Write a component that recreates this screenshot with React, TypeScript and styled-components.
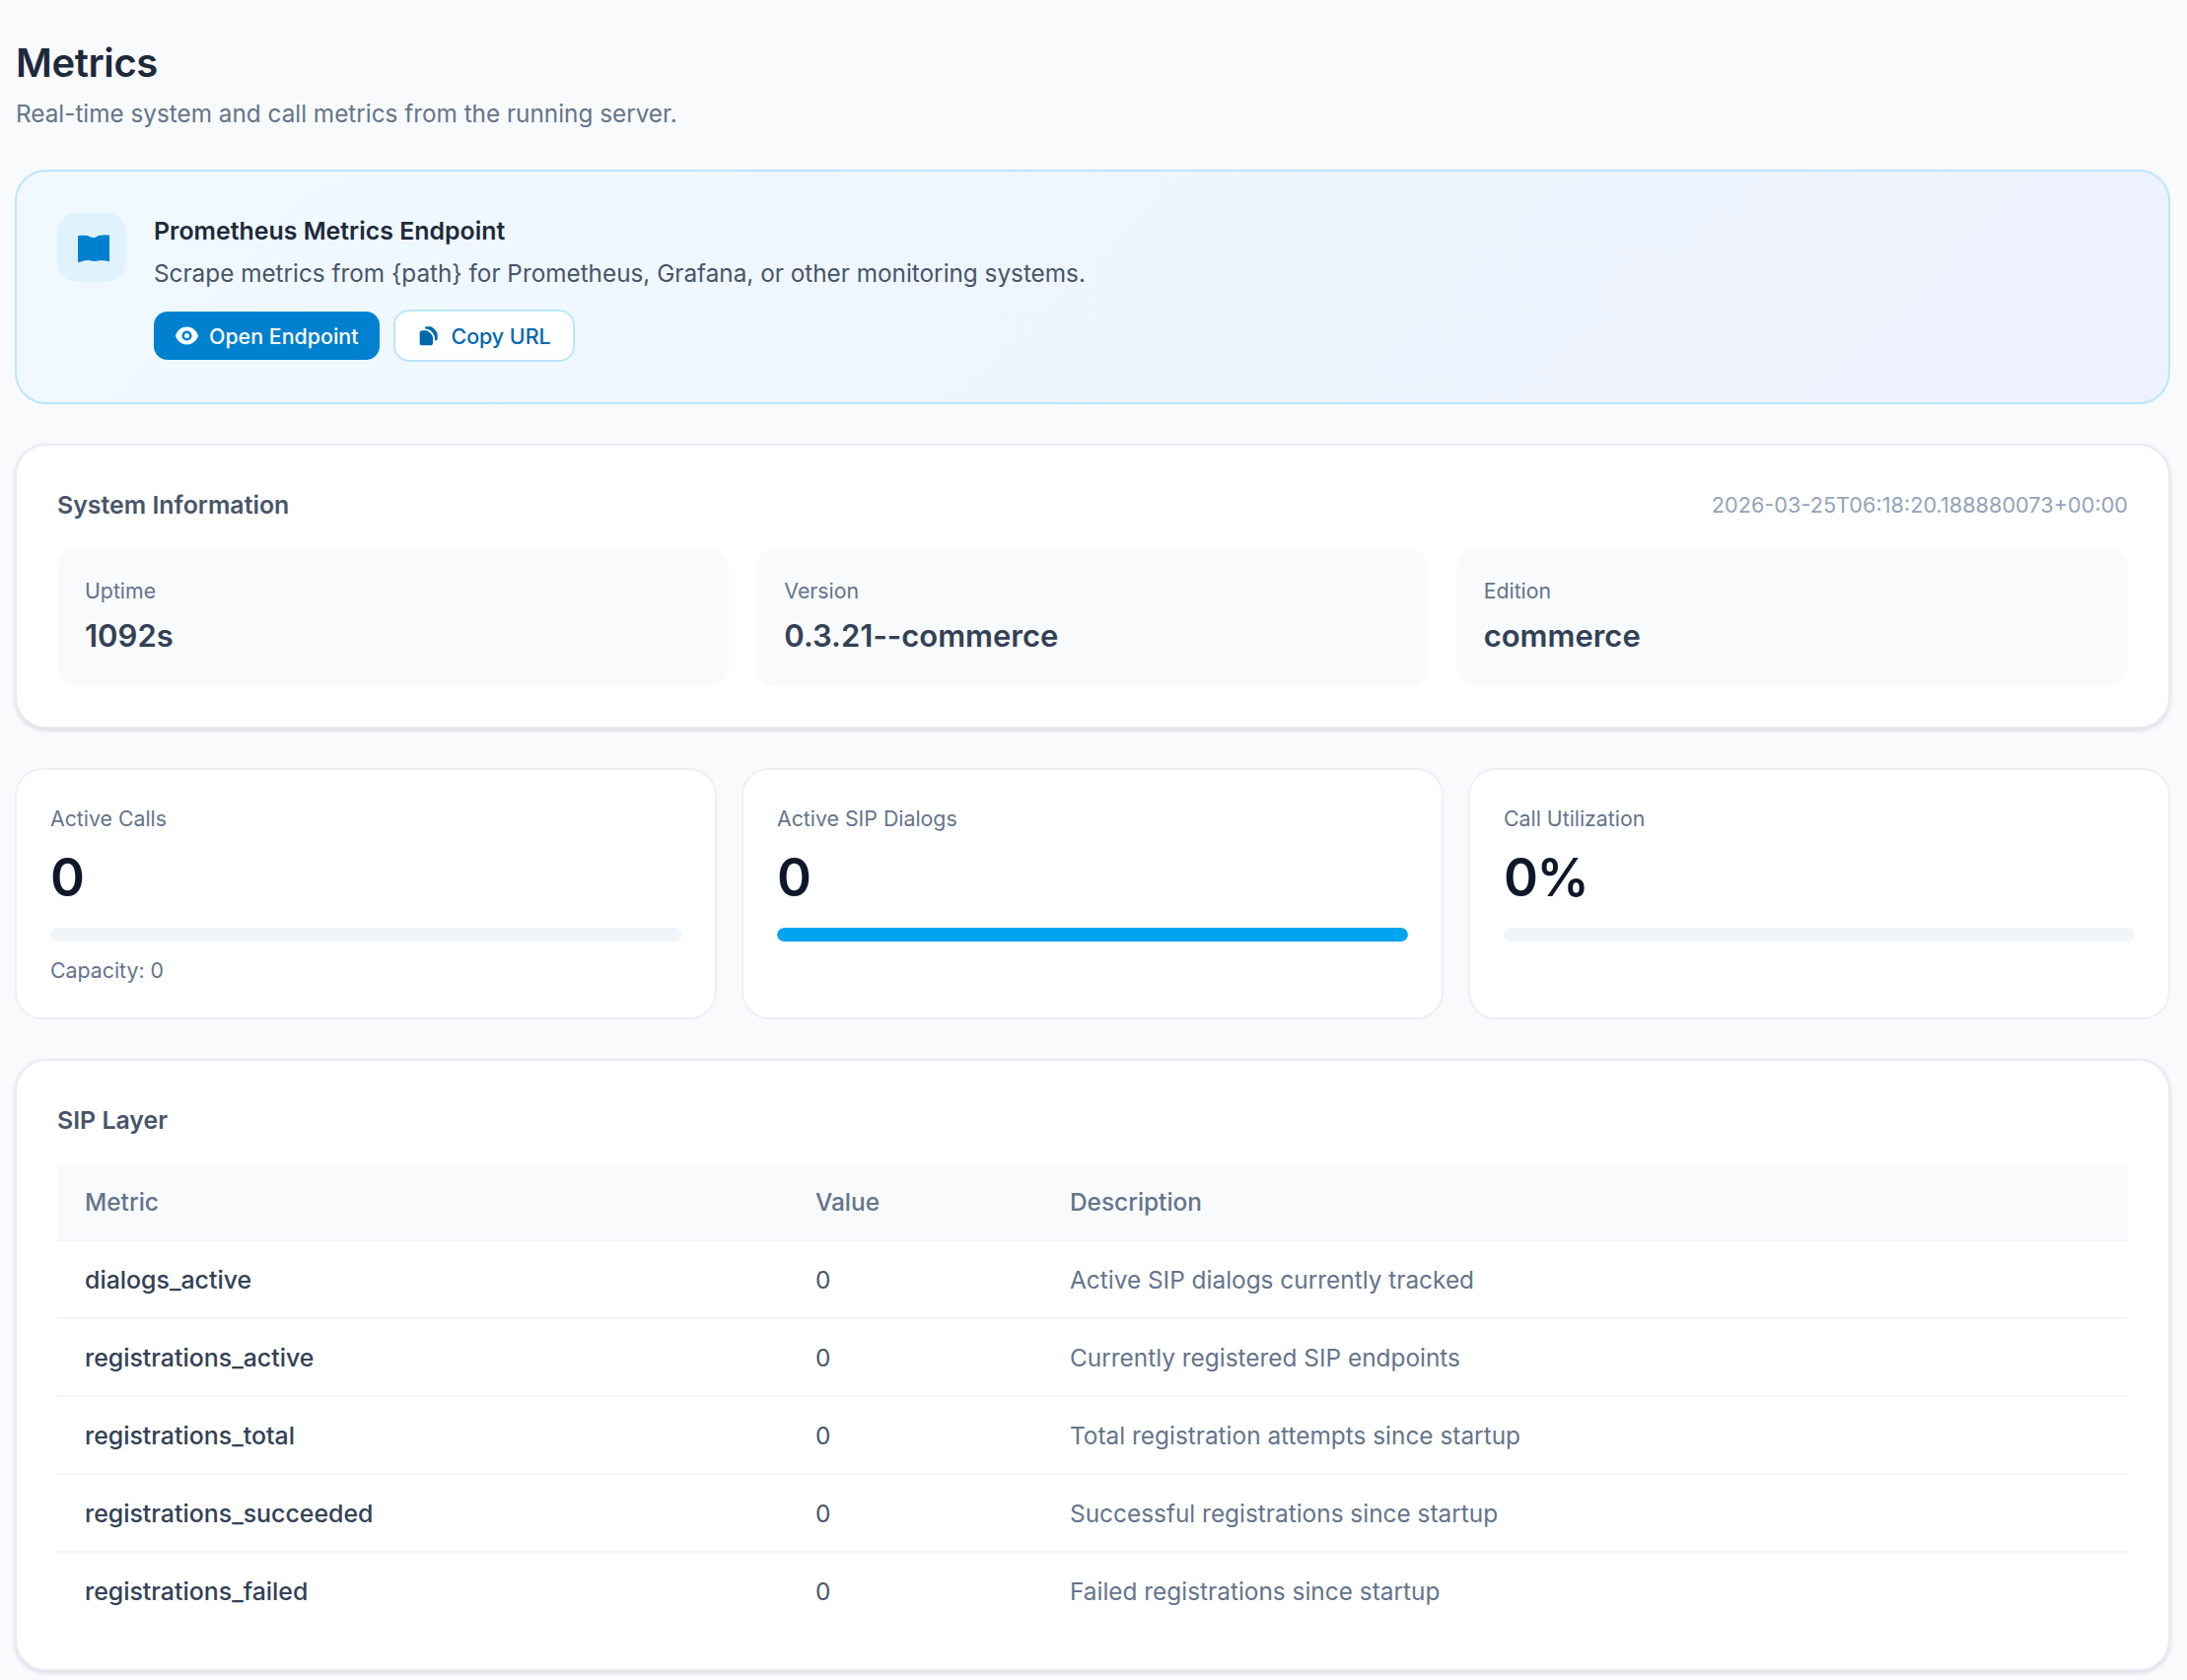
import React from "react";
import styled, { createGlobalStyle } from "styled-components";

const Global = createGlobalStyle`
  html, body { margin: 0; padding: 0; background: #f8fafc; }
  body { font-family: Inter, "Noto Sans", "Liberation Sans", sans-serif; -webkit-font-smoothing: antialiased; }
  * { box-sizing: border-box; }
`;

const Page = styled.main`
  display: flex;
  flex-direction: column;
  gap: 40px;
  min-height: 1704px;
  padding: 40px 17px 9px 15px;
  background: #f8fafc;
`;

const Header = styled.header`
  display: flex;
  flex-direction: column;
  gap: 11px;
  padding-left: 1px;
`;

const Title = styled.h1`
  margin: 0;
  font-size: 40px;
  line-height: 48px;
  font-weight: 600;
  letter-spacing: -0.4px;
  color: #1e293b;
`;

const Subtitle = styled.p`
  margin: 0;
  font-size: 24.3px;
  line-height: 33px;
  color: #64748b;
`;

const Banner = styled.section`
  display: flex;
  gap: 28px;
  padding: 42px 41px 41px;
  border: 2px solid #bae6fd;
  border-radius: 32px;
  background: linear-gradient(135deg, #f0f9ff 0%, #eef2ff 100%);
`;

const BannerIcon = styled.div`
  display: flex;
  align-items: center;
  justify-content: center;
  flex: none;
  width: 70px;
  height: 70px;
  padding: 1px 0 0 3px;
  border-radius: 20px;
  background: #e0f2fe;
`;

const BannerBody = styled.div`
  display: flex;
  flex-direction: column;
`;

const BannerTitle = styled.h2`
  margin: 0;
  font-size: 24.9px;
  line-height: 36px;
  font-weight: 600;
  color: #1e293b;
`;

const BannerText = styled.p`
  margin: 7px 0 0;
  font-size: 24.3px;
  line-height: 36px;
  color: #475569;
`;

const Actions = styled.div`
  display: flex;
  align-items: center;
  gap: 14px;
  margin-top: 19px;
`;

const PrimaryButton = styled.button`
  display: inline-flex;
  align-items: center;
  gap: 11px;
  height: 49px;
  padding: 0 22px;
  border: none;
  border-radius: 14px;
  background: #0081d0;
  color: #fff;
  font: 500 21.4px Inter, sans-serif;
`;

const GhostButton = styled.button`
  display: inline-flex;
  align-items: center;
  gap: 13px;
  height: 53px;
  padding: 0 22px 0 24px;
  border: 2px solid #bae6fd;
  border-radius: 16px;
  background: #fff;
  color: #0068ad;
  font: 500 21.4px Inter, sans-serif;
`;

const Card = styled.section<{ $bottom?: number }>`
  padding: 41px 41px ${(p) => p.$bottom ?? 41}px;
  border: 2px solid #e8ecf1;
  border-radius: 32px;
  background: #fff;
  box-shadow: 0 2px 4px rgba(15, 23, 42, 0.14);
`;

const CardHead = styled.div`
  display: flex;
  align-items: center;
  justify-content: space-between;
  height: 35px;
  padding-top: 2px;
  margin-bottom: 28px;
`;

const CardTitle = styled.h3`
  margin: 0;
  font-size: 24.9px;
  font-weight: 600;
  color: #475569;
`;

const Stamp = styled.span`
  font-size: 21.7px;
  color: #94a3b8;
`;

const TileGrid = styled.div`
  display: grid;
  grid-template-columns: repeat(3, 1fr);
  gap: 28px;
`;

const Tile = styled.div`
  display: flex;
  flex-direction: column;
  gap: 10px;
  height: 140px;
  padding: 29px 28px 0;
  border-radius: 20px;
  background: #f8fafc;
`;

const TileLabel = styled.span`
  font-size: 21.3px;
  line-height: 28px;
  color: #64748b;
`;

const TileValue = styled.span`
  font-size: 31px;
  line-height: 44px;
  font-weight: 600;
  color: #334155;
`;

const StatGrid = styled.div`
  display: grid;
  grid-template-columns: repeat(3, 1fr);
  gap: 25px;
`;

const StatCard = styled.div`
  height: 255px;
  padding: 35px 34px 0;
  border: 2px solid #edf0f4;
  border-radius: 28px;
  background: #fff;
`;

const StatLabel = styled.div`
  font-size: 21.3px;
  line-height: 28px;
  color: #64748b;
`;

const StatValue = styled.div`
  margin-top: 11px;
  font-size: 53px;
  line-height: 70px;
  font-weight: 600;
  letter-spacing: -1.5px;
  color: #0f172a;
`;

const Track = styled.div`
  height: 14px;
  margin-top: 16px;
  border-radius: 7px;
  background: #f1f5f9;
  overflow: hidden;
`;

const Fill = styled.div`
  height: 100%;
  border-radius: 7px;
  background: #00a5ef;
`;

const StatNote = styled.div`
  margin-top: 15px;
  font-size: 21.3px;
  line-height: 28px;
  color: #64748b;
`;

const Table = styled.table`
  width: 100%;
  table-layout: fixed;
  border-collapse: separate;
  border-spacing: 0;
`;

const Th = styled.th<{ $w?: number }>`
  width: ${(p) => (p.$w ? `${p.$w}px` : "auto")};
  height: 79px;
  padding: 0 28px;
  border-bottom: 2px solid #f1f5f9;
  background: #f8fafc;
  text-align: left;
  font-size: 24.4px;
  font-weight: 500;
  color: #64748b;
`;

const Td = styled.td<{ $kind: "name" | "value" | "desc" }>`
  height: 79px;
  padding: 0 28px;
  border-bottom: 2px solid #f1f5f9;
  font-size: ${(p) => (p.$kind === "name" ? "24.9px" : "24.4px")};
  font-weight: ${(p) => (p.$kind === "name" ? 500 : 400)};
  color: ${(p) => (p.$kind === "name" ? "#334155" : p.$kind === "value" ? "#475569" : "#64748b")};
  tr:last-child > & {
    height: 78px;
    border-bottom: none;
  }
`;

const BookIcon = () => (
  <svg width="32" height="28" viewBox="0 0 32 28" fill="#0081d0">
    <path d="M0 1.2C3 0.6 6 0.6 9.5 0.9C11 1 12 2.4 14 2.8C16 3.1 18 2.9 19.5 1.7C21 0.6 24 0.7 27 0.2C29 0 30.5 0.3 32 0.6V27.3C30 26.6 27 26.4 24 26.2C21.5 26 20 26.6 18 27C16 27.3 14.5 26.8 12.5 26.2C10 25.7 8 26 6 26.4C4 26.8 2 28 0 28Z" />
  </svg>
);

const EyeIcon = () => (
  <svg width="23" height="19" viewBox="0 0 23 19">
    <path
      fillRule="evenodd"
      fill="#fff"
      d="M11.5 .5C16.5 .5 20.5 3.5 22.6 8.2a3 3 0 0 1 0 2.6C20.5 15.5 16.5 18.5 11.5 18.5S2.5 15.5 .4 10.8a3 3 0 0 1 0-2.6C2.5 3.5 6.5 .5 11.5 .5ZM11.5 4.4A5.1 5.1 0 1 0 11.5 14.6A5.1 5.1 0 1 0 11.5 4.4Z"
    />
    <circle cx="11.5" cy="9.5" r="2.5" fill="#fff" />
  </svg>
);

const CopyIcon = () => (
  <svg width="19" height="21" viewBox="0 0 57 63" fill="#0068ad">
    <path d="M10 16H22C30 18 40 28 42 36V53a8 8 0 0 1-8 8H10a8 8 0 0 1-8-8V24a8 8 0 0 1 8-8Z" />
    <path d="M17 9a6 6 0 0 1 6-5H36C44 8 54 18 56 26V40a6 6 0 0 1-8 6V36C46 24 32 10 22 11Z" />
  </svg>
);

const rows = [
  ["dialogs_active", "Active SIP dialogs currently tracked"],
  ["registrations_active", "Currently registered SIP endpoints"],
  ["registrations_total", "Total registration attempts since startup"],
  ["registrations_succeeded", "Successful registrations since startup"],
  ["registrations_failed", "Failed registrations since startup"],
];

export default function App() {
  return (
    <Page>
      <Global />
      <Header>
        <Title>Metrics</Title>
        <Subtitle>Real-time system and call metrics from the running server.</Subtitle>
      </Header>

      <Banner>
        <BannerIcon>
          <BookIcon />
        </BannerIcon>
        <BannerBody>
          <BannerTitle>Prometheus Metrics Endpoint</BannerTitle>
          <BannerText>Scrape metrics from {"{path}"} for Prometheus, Grafana, or other monitoring systems.</BannerText>
          <Actions>
            <PrimaryButton>
              <EyeIcon />
              Open Endpoint
            </PrimaryButton>
            <GhostButton>
              <CopyIcon />
              Copy URL
            </GhostButton>
          </Actions>
        </BannerBody>
      </Banner>

      <Card>
        <CardHead>
          <CardTitle>System Information</CardTitle>
          <Stamp>2026-03-25T06:18:20.188880073+00:00</Stamp>
        </CardHead>
        <TileGrid>
          <Tile>
            <TileLabel>Uptime</TileLabel>
            <TileValue>1092s</TileValue>
          </Tile>
          <Tile>
            <TileLabel>Version</TileLabel>
            <TileValue>0.3.21--commerce</TileValue>
          </Tile>
          <Tile>
            <TileLabel>Edition</TileLabel>
            <TileValue>commerce</TileValue>
          </Tile>
        </TileGrid>
      </Card>

      <StatGrid>
        <StatCard>
          <StatLabel>Active Calls</StatLabel>
          <StatValue>0</StatValue>
          <Track />
          <StatNote>Capacity: 0</StatNote>
        </StatCard>
        <StatCard>
          <StatLabel>Active SIP Dialogs</StatLabel>
          <StatValue>0</StatValue>
          <Track>
            <Fill />
          </Track>
        </StatCard>
        <StatCard>
          <StatLabel>Call Utilization</StatLabel>
          <StatValue>0%</StatValue>
          <Track />
        </StatCard>
      </StatGrid>

      <Card $bottom={40}>
        <CardHead>
          <CardTitle>SIP Layer</CardTitle>
        </CardHead>
        <Table>
          <thead>
            <tr>
              <Th $w={741}>Metric</Th>
              <Th $w={258}>Value</Th>
              <Th>Description</Th>
            </tr>
          </thead>
          <tbody>
            {rows.map(([name, desc]) => (
              <tr key={name}>
                <Td $kind="name">{name}</Td>
                <Td $kind="value">0</Td>
                <Td $kind="desc">{desc}</Td>
              </tr>
            ))}
          </tbody>
        </Table>
      </Card>
    </Page>
  );
}
